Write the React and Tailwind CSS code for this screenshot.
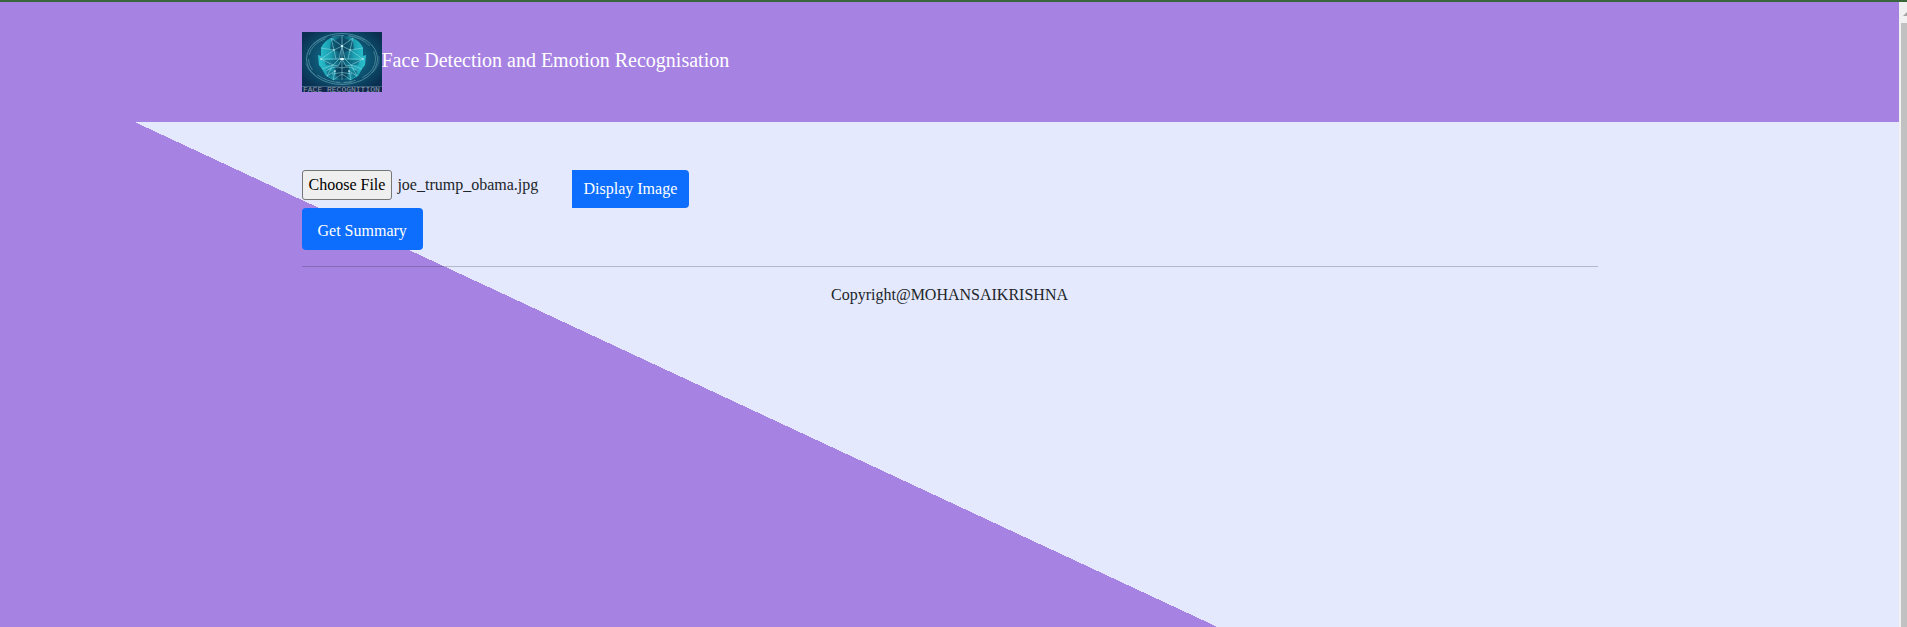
function Logo() {
  return (
    <svg
      width="80"
      height="60"
      viewBox="0 0 80 60"
      role="img"
      aria-label="Face recognition"
      className="shrink-0 overflow-visible"
    >
      <defs>
        <radialGradient id="glow" cx="50%" cy="45%" r="60%">
          <stop offset="0" stopColor="#1b8fa2" />
          <stop offset="0.5" stopColor="#0e5a78" />
          <stop offset="1" stopColor="#0a2f50" />
        </radialGradient>
        <linearGradient id="face" x1="0" y1="0" x2="1" y2="0">
          <stop offset="0" stopColor="#2cc3cf" />
          <stop offset="0.25" stopColor="#1aa0b2" />
          <stop offset="0.5" stopColor="#0c4a66" />
          <stop offset="0.75" stopColor="#1aa0b2" />
          <stop offset="1" stopColor="#2cc3cf" />
        </linearGradient>
      </defs>
      <rect width="80" height="60" fill="url(#glow)" />
      <g fill="none" stroke="#6fb3c0" strokeWidth="0.7">
        <ellipse cx="40" cy="27" rx="35.5" ry="25.5" opacity="0.85" />
        <ellipse cx="40" cy="27" rx="33.5" ry="23.5" strokeDasharray="24 7 12 4" opacity="0.8" />
        <ellipse cx="40" cy="27" rx="37" ry="24" strokeDasharray="16 22" opacity="0.5" />
      </g>
      <path
        d="M29 6Q40 2 51 6Q58 9 61 16L61 24 64 23 63 33 60 37 56 44 49 48H31L24 44 20 37 17 33 16 23 19 24 19 16Q22 9 29 6Z"
        fill="url(#face)"
      />
      <path d="M29 9L39 6 39 20 28 18Z M51 9L41 6 41 20 52 18Z" fill="#0a3957" opacity="0.6" />
      <path d="M22 28L35 28 31 33 24 33Z M58 28L45 28 49 33 56 33Z" fill="#0a4864" opacity="0.45" />
      <path d="M33 35Q40 30 47 35L45 46H35Z" fill="#08324f" opacity="0.65" />
      <path d="M24 37L31 40 29 46 25 43Z M56 37L49 40 51 46 55 43Z" fill="#0a4864" opacity="0.4" />
      <path
        d="M40 4V48 M29 6L40 14 51 6 M19 16L32 18 40 14 48 18 61 16 M29 6L32 18 19 27 40 27 61 27 48 18 51 6 M32 18L34 27 M48 18L46 27 M19 27L31 33 37 27 40 14 43 27 49 33 61 27 M31 33L36 34 40 27 44 34 49 33 M20 37L31 33 25 44 33 39 31 48 40 42 49 48 47 39 55 44 49 33 60 37 M24 39Q32 33 40 36Q48 33 56 39 M30 42Q40 39 50 42"
        fill="none"
        stroke="#93dde6"
        strokeWidth="0.55"
      />
      <g fill="#e3fbff">
        <circle cx="40" cy="14" r="1.1" />
        <circle cx="32" cy="18" r="0.7" />
        <circle cx="48" cy="18" r="0.7" />
        <ellipse cx="40" cy="27" rx="2.4" ry="0.9" />
        <circle cx="33" cy="39" r="0.8" />
        <circle cx="47" cy="39" r="0.8" />
        <circle cx="19" cy="27" r="0.8" />
        <circle cx="61" cy="27" r="0.8" />
      </g>
      <rect y="54" width="80" height="6" fill="#13284c" />
      <path d="M0 54.5H80" stroke="#4c7a92" strokeWidth="0.7" />
      <text x="1" y="60" fontSize="8" fontFamily="Liberation Mono, monospace" fill="#8ba0b2">
        FACE RECOGNITION
      </text>
    </svg>
  );
}

function Header() {
  return (
    <header className="bg-[#a682e3] py-[30px]">
      <div className="mx-auto flex max-w-[1320px] items-center px-3">
        <Logo />
        <h1 className="pb-1 text-[20px] leading-[30px] text-white">
          Face Detection and Emotion Recognisation
        </h1>
      </div>
    </header>
  );
}

function UploadForm() {
  return (
    <form className="pt-12" onSubmit={(event) => event.preventDefault()}>
      <div className="flex items-start">
        <label htmlFor="photo" className="flex w-[270px] cursor-pointer items-center gap-[5px]">
          <input id="photo" type="file" accept="image/*" className="sr-only" />
          <span className="rounded-[3px] border border-[#767676] bg-[#efefef] px-1.5 py-0.5 text-black">
            Choose File
          </span>
          <span>joe_trump_obama.jpg</span>
        </label>
        <button type="button" className="rounded-r bg-[#0d6efd] px-3 pt-[7px] pb-[7px] text-white">
          Display Image
        </button>
      </div>
      <button type="submit" className="block rounded bg-[#0d6efd] px-4 pt-[11px] pb-[7px] text-white">
        Get Summary
      </button>
    </form>
  );
}

function ScrollTrack() {
  return (
    <div aria-hidden="true" className="flex w-2 shrink-0 flex-col overflow-hidden bg-[#f1f1f1] pl-0.5">
      <svg width="6" height="21" viewBox="0 0 6 21" className="shrink-0">
        <path d="M2 14L6 10V14Z" fill="#a3a3a3" />
      </svg>
      <div className="grow bg-[#c1c1c1]" />
    </div>
  );
}

export default function App() {
  return (
    <div className="flex min-h-screen border-t-2 border-[#3a663c] font-['Liberation_Serif','Times_New_Roman',serif] text-[16px] leading-6 text-[#212529]">
      <div className="min-w-0 grow bg-[linear-gradient(25deg,#a682e3_50%,#e4e9fd_50%)] bg-[length:100%_1000px] bg-no-repeat">
        <Header />
        <main className="mx-auto max-w-[1320px] px-3">
          <UploadForm />
          <hr className="my-4 border-[#212529]/25" />
          <footer className="text-center">Copyright@MOHANSAIKRISHNA</footer>
        </main>
      </div>
      <ScrollTrack />
    </div>
  );
}
